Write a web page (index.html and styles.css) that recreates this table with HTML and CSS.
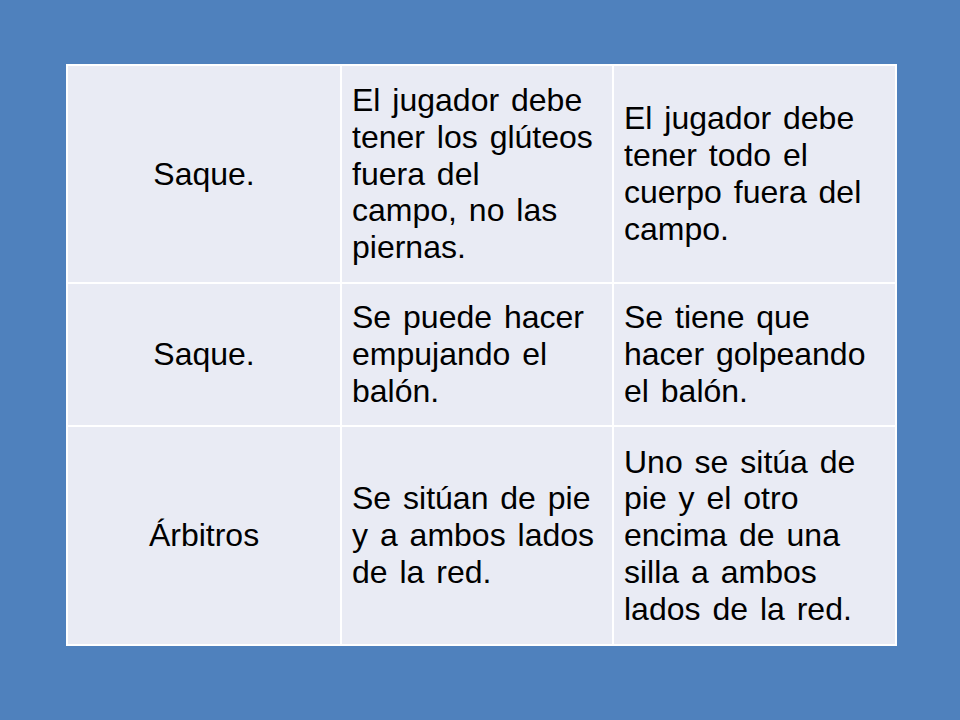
FILE: index.html
```html
<!DOCTYPE html>
<html lang="es">
<head>
<meta charset="utf-8">
<title>Reglas</title>
<link rel="stylesheet" href="styles.css">
</head>
<body>
<div class="slide">
  <table class="grid">
    <colgroup>
      <col class="c1"><col class="c2"><col class="c3">
    </colgroup>
    <tr class="r1">
      <td class="label">Saque.</td>
      <td>El jugador debe<br>tener los glúteos<br>fuera del<br>campo, no las<br>piernas.</td>
      <td>El jugador debe<br>tener todo el<br>cuerpo fuera del<br>campo.</td>
    </tr>
    <tr class="r2">
      <td class="label">Saque.</td>
      <td>Se puede hacer<br>empujando el<br>balón.</td>
      <td>Se tiene que<br>hacer golpeando<br>el balón.</td>
    </tr>
    <tr class="r3">
      <td class="label">Árbitros</td>
      <td>Se sitúan de pie<br>y a ambos lados<br>de la red.</td>
      <td>Uno se sitúa de<br>pie y el otro<br>encima de una<br>silla a ambos<br>lados de la red.</td>
    </tr>
  </table>
</div>
</body>
</html>
```
FILE: styles.css
```css
html, body {
  margin: 0;
  padding: 0;
  background: #4f81bd;
}
.slide {
  width: 960px;
  height: 720px;
  padding: 64px 0 0 66px;
  box-sizing: border-box;
}
.grid {
  border-collapse: collapse;
  table-layout: fixed;
  width: 829px;
  font-family: "Liberation Sans", Arial, sans-serif;
  font-size: 32px;
  line-height: 36.8px;
  color: #000;
}
.c1 { width: 274px; }
.c2 { width: 272px; }
.c3 { width: 283px; }
.grid td {
  background: #e9ebf4;
  border: 2px solid #ffffff;
  padding: 0 10px;
  vertical-align: middle;
  white-space: nowrap;
  word-spacing: 3px;
  box-sizing: border-box;
}
.grid td.label {
  text-align: center;
  word-spacing: 0;
}
.r1 { height: 218px; }
.r2 { height: 143px; }
.r3 { height: 219px; }
```
